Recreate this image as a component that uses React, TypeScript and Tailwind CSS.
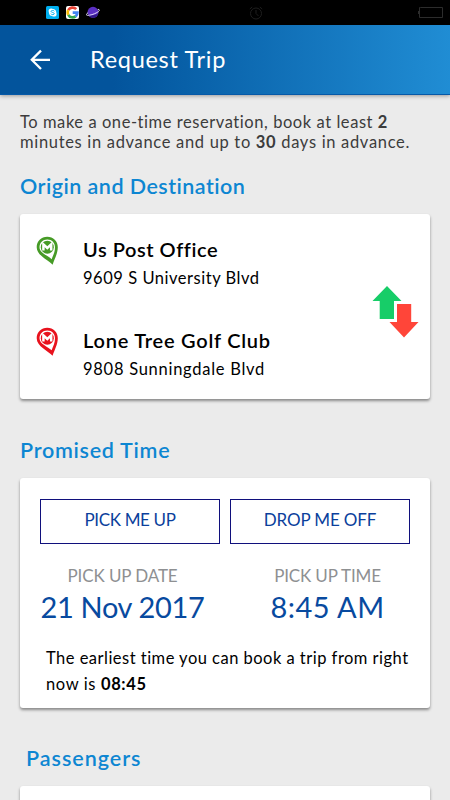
const StatusBar = () => {
  return (
    <div className="flex h-[25px] items-center bg-black">
      <svg className="ml-[46px]" width="13" height="13" viewBox="0 0 13 13">
        <rect width="13" height="13" rx="1.5" fill="#00aff0" />
        <circle cx="5.2" cy="5" r="2.6" fill="#fff" />
        <circle cx="8" cy="8" r="2.6" fill="#fff" />
        <circle cx="6.6" cy="6.5" r="3.6" fill="#fff" />
        <path
          d="M8.3 5.2C7.9 4.2 5.2 4.1 5 5.4C4.9 6.6 8.2 6.2 8.3 7.7C8.2 9 5.3 8.9 4.9 7.7"
          fill="none"
          stroke="#00aff0"
          strokeWidth="1"
        />
      </svg>
      <svg className="ml-[7px]" width="13" height="13" viewBox="0 0 13 13">
        <rect width="13" height="13" rx="2" fill="#fff" />
        <g fill="none" strokeWidth="2.7">
          <path d="M10.2 3.2A4.9 4.9 0 0 0 2.3 4.2" stroke="#ea4335" />
          <path d="M2.3 4.2A4.9 4.9 0 0 0 2.3 8.8" stroke="#fbbc05" />
          <path d="M2.3 8.8A4.9 4.9 0 0 0 9.6 10.4" stroke="#34a853" />
          <path d="M6.7 6.6H11.4A4.9 4.9 0 0 1 9.6 10.4" stroke="#4285f4" />
        </g>
      </svg>
      <svg className="ml-[7px]" width="14" height="13" viewBox="0 0 14 13">
        <circle cx="7" cy="6.3" r="5.5" fill="#5b2fc4" />
        <path d="M2 8.8A5.5 5.5 0 0 0 12.3 7.2C9 9.2 5 9.8 2 8.8Z" fill="#32188a" />
        <path
          d="M2.1 6.6C-.6 8.8 0 9.8 3.4 9.2C8 8.5 13.6 5.6 13.4 4C13.3 3.4 12.6 3.3 11.8 3.4"
          fill="none"
          stroke="#e6e0fa"
          strokeWidth="1"
        />
      </svg>
      <svg className="ml-[149px]" width="14" height="14" viewBox="0 0 14 14" fill="none" stroke="#1e1e1e">
        <circle cx="7" cy="7.5" r="5.5" />
        <path d="M7 4V7.5L9.5 10M.8 3L3.2 1M13.2 3L10.8 1" />
      </svg>
      <svg className="ml-auto mr-[6px]" width="26" height="12" viewBox="0 0 26 12" fill="none" stroke="#2c2c2c">
        <path d="M2.5 .5H24.5V10.5H1.5V.5H2.5M.5 4V7" />
      </svg>
    </div>
  );
};

const Pin = ({ color }: { color: string }) => {
  return (
    <svg className="mt-[2px] shrink-0" width="23" height="30" viewBox="0 0 23 30">
      <path
        d="M11.2.8C17.3.8 21.8 5.4 21.8 11.2C21.8 17.6 18.5 22.6 16.6 28.8C12.4 23.8.7 19.6.7 11.2C.7 5.2 5.3.8 11.2.8Z"
        fill={color}
      />
      <path
        d="M11.3 3.4C16 3.4 19 6.8 19 11.2C19 16 17.2 19.2 15.6 23.2C12 19.5 3.5 17.2 3.5 11.2C3.5 6.6 6.8 3.4 11.3 3.4Z"
        fill="#fff"
      />
      <circle cx="11.3" cy="11.2" r="6.5" fill={color} />
      <path d="M7.4 14.6V8.4L11.3 12L15.2 8.4V14.6" fill="none" stroke="#fff" strokeWidth="2.5" />
    </svg>
  );
};

const stops = [
  {
    id: 1,
    name: "Us Post Office",
    address: "9609 S University Blvd",
    color: "#469b26",
    nameStyle: "tracking-[0.55px]",
    addressStyle: "tracking-[0.53px]",
  },
  {
    id: 2,
    name: "Lone Tree Golf Club",
    address: "9808 Sunningdale Blvd",
    color: "#e8121d",
    nameStyle: "tracking-[0.76px]",
    addressStyle: "tracking-[0.73px]",
  },
];

const SwapArrows = () => {
  return (
    <svg className="mt-[72px] mr-[10px] ml-auto shrink-0" width="48" height="53" viewBox="0 0 48 53">
      <path d="M15 0L29.5 15H22V33H7.7V15H.5Z" fill="#17cd68" />
      <path d="M25 18H39.2V36H46.5L32 51.5L17.5 36H25Z" fill="#ff4539" />
    </svg>
  );
};

const card = "rounded-[3px] bg-white shadow-[0_2px_3px_rgba(0,0,0,0.42)]";

export default function RequestTrip() {
  return (
    <div className="h-[800px] w-[450px] overflow-hidden bg-[#ebebeb] font-['Lato',sans-serif] text-black">
      <StatusBar />
      <header className="flex h-[70px] items-center border-b border-[#0659a8] bg-linear-to-r from-[#03549c] from-25% to-[#208dd4] shadow-[0_1px_4px_rgba(0,0,0,0.35)]">
        <svg className="ml-[30px]" width="21" height="21" viewBox="0 0 21 21" fill="none" stroke="#fff" strokeWidth="2.3">
          <path d="M20 10.8H2M11 1.6L1.8 10.8L11 20" />
        </svg>
        <h1 className="ml-[39px] text-[23.5px] tracking-[0.7px] whitespace-nowrap text-white">
          <span>Request Trip</span>
        </h1>
      </header>

      <main className="px-5">
        <p className="pt-[17px] text-[16.5px] leading-5 whitespace-nowrap text-[#3c3c3c]">
          <span className="tracking-[0.56px]">
            To make a one-time reservation, book at least <b>2</b>
          </span>
          <br />
          <span className="tracking-[0.68px]">
            minutes in advance and up to <b>30</b> days in advance.
          </span>
        </p>

        <h2 className="mt-5 text-[21.5px] leading-7 font-semibold whitespace-nowrap text-[#0d86d2]">
          <span className="tracking-[0.46px]">Origin and Destination</span>
        </h2>
        <section className={`${card} mt-[14px] flex h-[185px] pl-4`}>
          <div className="pt-5">
            {stops.map((stop) => (
              <div key={stop.id} className="flex h-[91px]">
                <Pin color={stop.color} />
                <div className="ml-6 whitespace-nowrap">
                  <h3 className="text-[20px] leading-[31px] font-semibold">
                    <span className={stop.nameStyle}>{stop.name}</span>
                  </h3>
                  <p className="text-[16.5px] leading-[26px]">
                    <span className={stop.addressStyle}>{stop.address}</span>
                  </p>
                </div>
              </div>
            ))}
          </div>
          <SwapArrows />
        </section>

        <h2 className="mt-[37px] text-[21.5px] leading-7 font-semibold whitespace-nowrap text-[#0d86d2]">
          <span className="tracking-[0.72px]">Promised Time</span>
        </h2>
        <section className={`${card} mt-[14px] h-[230px] px-5 pt-[21px] whitespace-nowrap`}>
          <div className="grid grid-cols-2 gap-[10px] text-center text-[17px] leading-[39px] text-[#0b3f9c]">
            <button className="h-[45px] border border-[#10107c] pb-1 tracking-[-0.35px]">
              <span>PICK ME UP</span>
            </button>
            <button className="h-[45px] border border-[#10107c] pb-1 tracking-[-0.15px]">
              <span>DROP ME OFF</span>
            </button>
          </div>
          <div className="mt-[18px] flex justify-between text-center text-[#084a9f]">
            <div className="w-[165px]">
              <p className="text-[17px] leading-7 tracking-[-0.1px] text-[#8e9092]">
                <span>PICK UP DATE</span>
              </p>
              <p className="text-[29px] leading-[33px] tracking-[-0.35px]">
                <span>21 Nov 2017</span>
              </p>
            </div>
            <div className="w-[165px]">
              <p className="text-[17px] leading-7 tracking-[-0.15px] text-[#8e9092]">
                <span>PICK UP TIME</span>
              </p>
              <p className="text-[29px] leading-[33px] tracking-[0.5px]">
                <span>8:45 AM</span>
              </p>
            </div>
          </div>
          <p className="mt-[22px] ml-[6px] text-[16.5px] leading-[26px]">
            <span className="tracking-[0.48px]">The earliest time you can book a trip from right</span>
            <br />
            <span className="tracking-[0.62px]">
              now is <b>08:45</b>
            </span>
          </p>
        </section>

        <h2 className="mt-9 ml-[6px] text-[21.5px] leading-7 font-semibold whitespace-nowrap text-[#0d86d2]">
          <span className="tracking-[0.98px]">Passengers</span>
        </h2>
        <section className={`${card} mt-[14px] h-[120px]`}></section>
      </main>
    </div>
  );
}
